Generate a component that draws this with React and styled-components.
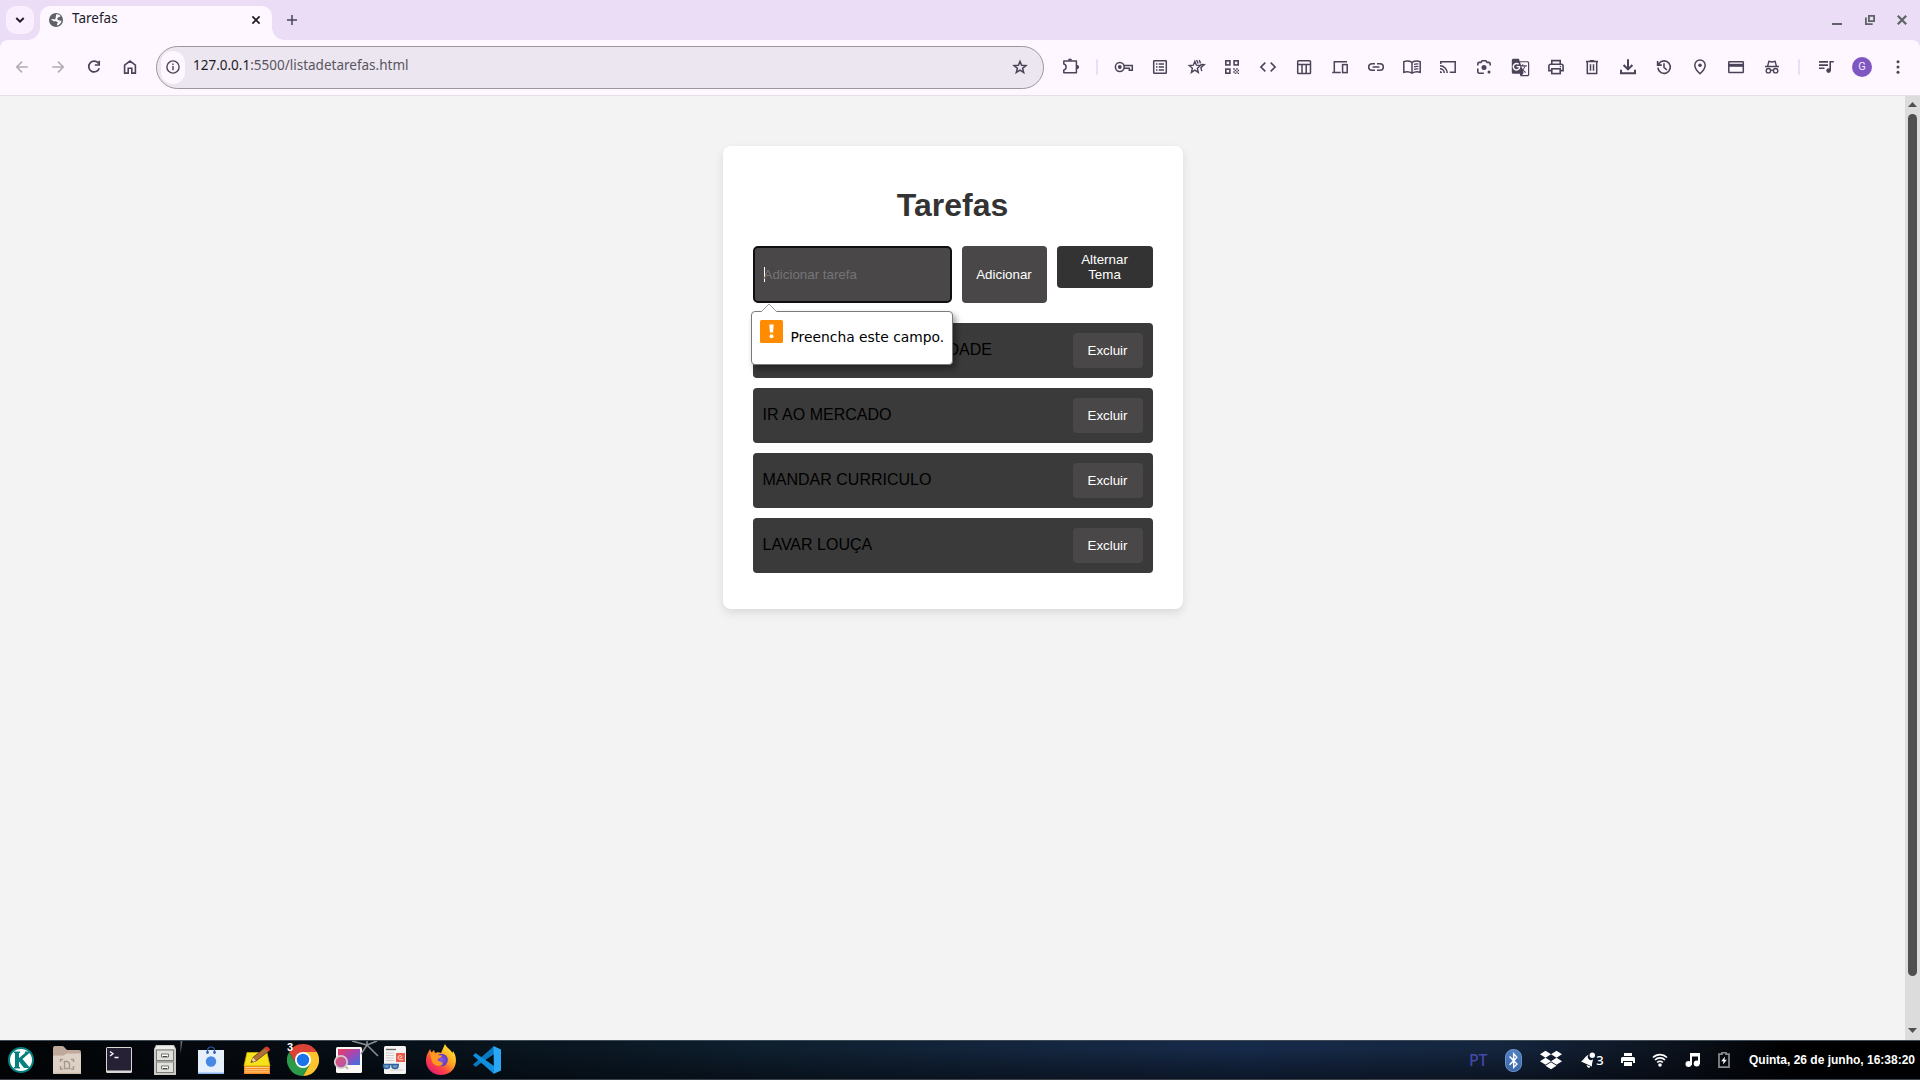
import React from "react";
import styled, { createGlobalStyle } from "styled-components";
import { FaBluetoothB, FaDropbox } from "react-icons/fa";
import { MdGTranslate } from "react-icons/md";

const Global = createGlobalStyle`
  * { box-sizing: border-box; }
  html, body { margin: 0; padding: 0; }
  body { font-family: "Liberation Sans", Arial, sans-serif; overflow: hidden; }
  button, input { font-family: inherit; }
  svg { display: block; flex: none; }
`;

const Screen = styled.div`
  width: 1920px;
  height: 1080px;
  display: flex;
  flex-direction: column;
  background: #eaddf5;
`;

/* ---------- Browser: tab strip ---------- */

const TabStrip = styled.div`
  height: 40px;
  display: flex;
  background: #eaddf5;
  padding: 6px 8px 0 6px;
  font-family: "Noto Sans", sans-serif;
`;

const TabSearch = styled.div`
  width: 28px;
  height: 28px;
  border-radius: 10px;
  background: #f9effe;
  display: flex;
  align-items: center;
  justify-content: center;
`;

const Tab = styled.div`
  position: relative;
  width: 232px;
  height: 34px;
  margin-left: 6px;
  padding: 0 11px 6px 9px;
  border-radius: 10px 10px 0 0;
  background: #fef7ff;
  display: flex;
  align-items: center;
  &::before, &::after {
    content: "";
    position: absolute;
    bottom: 0;
    width: 12px;
    height: 12px;
  }
  &::before {
    left: -12px;
    background: radial-gradient(circle at 0 0, transparent 11.5px, #fef7ff 12px);
  }
  &::after {
    right: -12px;
    background: radial-gradient(circle at 100% 0, transparent 11.5px, #fef7ff 12px);
  }
`;

const TabTitle = styled.span`
  flex: 1;
  margin-left: 9px;
  padding-bottom: 4px;
  font-size: 13.5px;
  line-height: 18px;
  color: #201b27;
`;

const NewTab = styled.div`
  margin-left: 15px;
  width: 10px;
  height: 28px;
  display: flex;
  align-items: center;
`;

const WindowControls = styled.div`
  margin-left: auto;
  display: flex;
  gap: 12.5px;
  height: 28px;
  align-items: center;
`;

/* ---------- Browser: toolbar ---------- */

const Toolbar = styled.div`
  height: 56px;
  display: flex;
  align-items: flex-start;
  background: #fef7ff;
  border-bottom: 1px solid #e6dfea;
  border-radius: 8px 8px 0 0;
  padding: 0 4px;
  color: #4a4458;
`;

const Cell = styled.div`
  flex: none;
  width: 36px;
  height: 54px;
  display: flex;
  align-items: center;
  justify-content: center;
  color: ${(p) => (p.$muted ? "#b2abb6" : "inherit")};
`;

const Omnibox = styled.div`
  flex: none;
  width: 888px;
  height: 43px;
  margin: 6px 8px 0 8px;
  padding: 0 13px 0 4px;
  border: 1px solid #9c96a1;
  border-radius: 22px;
  background: #ece6f0;
  display: flex;
  align-items: center;
  & > svg { margin-bottom: 1px; }
`;

const SiteInfo = styled.div`
  width: 24px;
  height: 33px;
  padding-bottom: 1px;
  border-radius: 12px;
  background: #fef7ff;
  display: flex;
  align-items: center;
  justify-content: center;
`;

const Url = styled.span`
  flex: 1;
  margin-left: 8px;
  padding-bottom: 5px;
  font-family: "Noto Sans", sans-serif;
  font-size: 13.5px;
  line-height: 20px;
  color: #5a5560;
  b { font-weight: 400; color: #1d1b20; }
`;

const Divider = styled.div`
  flex: none;
  width: 2px;
  height: 16px;
  margin: 19px 8px 0;
  border-radius: 1px;
  background: #e8defa;
`;

const Avatar = styled.div`
  width: 20px;
  height: 20px;
  border-radius: 50%;
  background: #7e57c2;
  color: #f3ecfb;
  font: 11px/20px Roboto, sans-serif;
  text-align: center;
`;

/* ---------- Page ---------- */

const Viewport = styled.div`
  flex: 1;
  display: flex;
  background: #f3f3f3;
`;

const Page = styled.main`
  flex: 1;
  display: flex;
  justify-content: center;
  align-items: flex-start;
  padding-top: 50px;
`;

const ScrollBar = styled.div`
  width: 15px;
  background: #dcdcdc;
  display: flex;
  flex-direction: column;
  align-items: center;
  padding: 6px 0 7px;
`;

const Thumb = styled.div`
  width: 9px;
  height: 862px;
  margin: 7px 0 auto;
  border-radius: 5px;
  background: #505050;
`;

const Card = styled.section`
  position: relative;
  width: 460px;
  height: 463px;
  padding: 41px 30px 0;
  border-radius: 8px;
  background: #fff;
  box-shadow: 0 4px 10px rgba(0, 0, 0, 0.1);
`;

const Title = styled.h1`
  margin: 0 0 22px;
  font-size: 32px;
  line-height: 37px;
  text-align: center;
  color: #333;
`;

const Form = styled.div`
  display: flex;
  align-items: flex-start;
  gap: 10px;
  margin-bottom: 20px;
`;

const Field = styled.div`
  width: 199px;
  height: 57px;
  padding: 0 9px;
  border: 2px solid #101010;
  border-radius: 5px;
  background: #4a4748;
  display: flex;
  align-items: center;
  font-size: 13.333px;
  color: #757575;
`;

const Caret = styled.span`
  width: 1px;
  height: 15px;
  margin-right: -1px;
  background: #fff;
`;

const Button = styled.button`
  border: 0;
  padding: 0;
  width: ${(p) => p.$w}px;
  height: ${(p) => p.$h}px;
  border-radius: 4px;
  background: ${(p) => (p.$dark ? "#333" : "#4a4748")};
  color: #fff;
  font-size: 13.333px;
  line-height: 15px;
`;

const List = styled.ul`
  list-style: none;
  margin: 0;
  padding: 0;
  display: flex;
  flex-direction: column;
  gap: 10px;
`;

const Item = styled.li`
  height: 55px;
  padding: 10px;
  border-radius: 4px;
  background: #3a3a3a;
  display: flex;
  justify-content: space-between;
  font-size: 16px;
  color: #000;
`;

const ItemText = styled.span`
  line-height: 18px;
  padding: 8px 0 0 ${(p) => p.$indent || 0}px;
  white-space: nowrap;
`;

const Bubble = styled.div`
  position: absolute;
  left: 28px;
  top: 165px;
  width: 202px;
  height: 54px;
  padding: 8px;
  border: 1px solid #7b7b7b;
  border-radius: 4px;
  background: #fff;
  box-shadow: 3px 4px 6px rgba(0, 0, 0, 0.4);
  display: flex;
  color: #000;
  font: 13.85px/18px "DejaVu Sans", sans-serif;
  white-space: nowrap;
`;

const BubbleArrow = styled.svg`
  position: absolute;
  left: 8px;
  top: -9px;
`;

const BubbleText = styled.span`
  margin: 8px 0 0 8px;
`;

/* ---------- Taskbar ---------- */

const Taskbar = styled.footer`
  height: 40px;
  display: flex;
  align-items: center;
  border-top: 1px solid #3f4c58;
  border-bottom: 1px solid #3b4148;
  background:
    linear-gradient(to bottom, rgba(0, 0, 0, 0) 20%, rgba(2, 3, 8, 0.5) 100%),
    linear-gradient(to right, #020405 0, #05090e 200px, #08131c 480px, #0e1f2e 760px, #14263f 1050px, #162a49 1250px, #14253d 1500px, #0d1420 1660px, #000 1790px);
`;

const Launcher = styled.div`
  position: relative;
  width: 46px;
  height: 38px;
  margin-left: ${(p) => p.$gap || 0}px;
  display: flex;
  align-items: center;
  justify-content: center;
`;

const Streak = styled.svg`
  position: absolute;
  left: ${(p) => p.$x}px;
  top: 0;
`;

const Count = styled.span`
  position: absolute;
  left: 7px;
  top: 0;
  font: bold 11px/13px "Liberation Sans", sans-serif;
  color: #fff;
`;

const Tray = styled.div`
  margin-left: auto;
  height: 38px;
  display: flex;
  align-items: center;
  color: #fff;
`;

const TrayCell = styled.div`
  flex: none;
  width: ${(p) => p.$w}px;
  display: flex;
  align-items: center;
  justify-content: center;
`;

const Lang = styled.span`
  font: 500 16px/20px "Noto Sans", sans-serif;
  color: #4448a8;
  letter-spacing: -0.3px;
`;

const BluetoothPill = styled.span`
  width: 17px;
  height: 23px;
  border-radius: 8px;
  border: 1px solid #6993cb;
  background: linear-gradient(#4f80c0, #3b69ab);
  display: flex;
  align-items: center;
  justify-content: center;
`;

const BellCount = styled.span`
  font: 500 13px/16px "Noto Sans", sans-serif;
  margin-left: 1px;
`;

const Clock = styled.time`
  flex: none;
  width: 178px;
  padding-left: 7px;
  font: bold 12px/16px "Liberation Sans", sans-serif;
  white-space: nowrap;
`;

/* ---------- Toolbar drawings, each on a 20px grid ---------- */

const G = ({ children, w = 1.5, size = 20 }) => (
  <svg width={size} height={size} viewBox="0 0 20 20" fill="none" stroke="currentColor" strokeWidth={w}>
    {children}
  </svg>
);
const fill = { fill: "currentColor", stroke: "none" };

const Back = () => <G w={1.5}><path d="M15.8 10H5M10 4.6 4.7 10 10 15.4" /></G>;
const Forward = () => <G w={1.5}><path d="M4.2 10H15M10 4.6 15.3 10 10 15.4" /></G>;
const Reload = () => <G w={1.7}><path d="M14.6 6.4A5.4 5.4 0 1 0 15.3 11.2" /><path d="M15.2 3.8V8H10.8" /></G>;
const Home = () => <G w={1.6}><path d="M4.6 16.1V8.2L10 4.1l5.4 4.1v7.9h-3.6v-4.9H8.2v4.9z" /></G>;
const Info = () => <G w={1.4}><circle cx="10" cy="10" r="6.1" /><path d="M10 9v4.3M10 6.4v1.5" /></G>;
const Star = () => <G w={1.5}><path d="M10 4.4l1.6 3.9 4.3.3-3.3 2.7 1.1 4.2-3.7-2.3-3.7 2.3 1.1-4.2L4.1 8.6l4.3-.3z" /></G>;
const Puzzle = () => (
  <G>
    <path d="M3.8 4.1H16.4V15.8H3.8V12.9C5.3 12.7 6.1 11.6 6.1 10.1S5.3 7.4 3.8 7.1Z" strokeLinejoin="round" />
    <path d="M7.9 3.5a2.1 2.1 0 0 1 4.2 0zM17 7.9a2.1 2.1 0 0 1 0 4.3z" {...fill} />
  </G>
);
const Key = () => (
  <G>
    <circle cx="5.8" cy="10" r="4.4" /><circle cx="5.8" cy="10" r="1.9" {...fill} />
    <path d="M9.900 8.600h8.400v4.600h-3v-2h-5.300" />
  </G>
);
const ListIcon = () => <G><rect x="3.7" y="3.7" width="12.6" height="12.6" rx=".6" /><path d="M6 7h1.500M6 10h1.500M6 13h1.500M8.700 7H14M8.700 10H14M8.700 13H14" strokeWidth="1.300" /></G>;
const Hotel = () => (
  <G w={1.4}>
    <path d="M8.900 4.400l1.500 3.800 4 .4-3 2.600.9 4.200-3.400-2.200-3.500 2.200 1-4.200-3.100-2.600 4-.4z" />
    <path d="M10.600 3l1.500 3.600M13.300 3l1.100 3.200M14.400 7.500l3.800.2-3.300 3 .9 3.500" />
  </G>
);
const Qr = () => (
  <G w={1.6}>
    <rect x="3.8" y="3.8" width="4.1" height="4.1" /><rect x="12.1" y="3.8" width="4.1" height="4.1" /><rect x="3.8" y="12.1" width="4.1" height="4.1" />
    <path d="M11.2 11.2h1.5v1.5h-1.5zM14.2 11.2h1.5v1.5h-1.5zM12.7 12.7h1.5v1.5h-1.5zM15.7 12.7H17v1.5h-1.3zM11.2 14.2h1.5v1.5h-1.5zM14.2 14.2h1.5v1.5h-1.5zM12.7 15.7h1.5V17h-1.5zM15.7 15.7H17V17h-1.3z" {...fill} />
  </G>
);
const Code = () => <G w={1.6}><path d="M7.3 5.6 2.9 10l4.4 4.4M12.7 5.6l4.4 4.4-4.4 4.4" /></G>;
const Table = () => <G><rect x="3.7" y="3.7" width="12.8" height="12.8" rx=".8" /><path d="M3.7 7.6h12.8M8 7.6v9M12.2 7.6v9" /></G>;
const Devices = () => <G><path d="M4.3 15V4.7H17M2.2 15.4h8.6" /><rect x="12.6" y="7.6" width="4.6" height="8" /></G>;
const Link = () => <G w={1.6}><path d="M9 6.7H6a3.3 3.3 0 0 0 0 6.6h3M11 6.7h3a3.3 3.3 0 0 1 0 6.6h-3M6.6 10h6.8" /></G>;
const Book = () => (
  <G>
    <path d="M10 5.4C7.6 3.9 4.3 3.8 1.8 4.6v10.6c2.5-.8 5.8-.6 8.2.9 2.4-1.5 5.7-1.7 8.2-.9V4.6C15.700 3.800 12.400 3.900 10 5.400v10.500" />
    <path d="M12 7.4c1.500-.500 3-.600 4.500-.400M12 9.900c1.500-.500 3-.600 4.500-.400M12 12.400c1.500-.500 3-.600 4.500-.400" strokeWidth="1.200" />
  </G>
);
const Cast = () => (
  <G>
    <path d="M2.800 7V4.700h14.400v10.600H11.800" />
    <path d="M2 8.800a7.200 7.200 0 0 1 7.200 7.200M2 11.700a4.300 4.300 0 0 1 4.300 4.300" />
    <path d="M2 14a2 2 0 0 1 2 2H2z" {...fill} />
  </G>
);
const Lens = () => (
  <G w={1.600}>
    <path d="M3.800 8.600V6.900a1.500 1.500 0 0 1 1.500-1.500h1.600l1.200-1.600h3.800l1.200 1.600h1.600a1.500 1.500 0 0 1 1.500 1.500v1.700M3.800 11.600v3.100a1.500 1.500 0 0 0 1.500 1.500h4.500" />
    <circle cx="10" cy="10.600" r="2.500" {...fill} /><circle cx="15" cy="14.900" r="1.500" {...fill} />
  </G>
);
const Printer = () => <G w={1.600}><path d="M5.800 7V3.600h8.400V7M5.600 13.600H2.900V9a1.800 1.800 0 0 1 1.800-1.800h10.600A1.800 1.800 0 0 1 17.100 9v4.600h-2.700" /><rect x="5.800" y="11.800" width="8.400" height="4.800" /><circle cx="14.400" cy="9.600" r=".8" {...fill} /></G>;
const Trash = () => <G><path d="M4 4.600h12M7.800 3.800h4.400M5.300 4.600v11.800h9.400V4.600M8.500 7.200v6.600M11.500 7.200v6.600" /></G>;
const Download = () => <G w={2}><path d="M10 2.200v10M5.600 8l4.400 4.400L14.400 8M3 12.800v3.400h14v-3.400" /></G>;
const History = () => <G w={1.600}><path d="M3.900 10.600a6.200 6.200 0 1 0 1.200-4.200L3.600 8.100M3.600 3.900v4.200h4.200M10 6.200v4.200l2.900 2.600" /></G>;
const Pin = () => <G><path d="M10 16.800C6.600 13.600 4.800 11 4.800 8.200a5.200 5.200 0 0 1 10.400 0c0 2.800-1.800 5.400-5.200 8.600z" /><circle cx="10" cy="8.200" r="1.800" {...fill} /></G>;
const CreditCard = () => <G><rect x="2.800" y="4.700" width="14.500" height="10.800" rx=".5" /><path d="M2.500 8.300h15" strokeWidth="3" /></G>;
const Incognito = () => (
  <G w={1.400}>
    <path d="M3 9.500h14M5.600 9.300l1.300-5L10 5l3.100-.7 1.300 5" />
    <circle cx="6.400" cy="13.700" r="2.200" /><circle cx="13.600" cy="13.700" r="2.200" /><path d="M8.600 13.400q1.400-.6 2.800 0" />
  </G>
);
const Queue = () => <G w={1.600}><path d="M3 4.900h9M3 8.100h9M3 11.300h5.500M14.200 13.500V4.700h3.600" /><circle cx="12.600" cy="13.600" r="2.300" {...fill} /></G>;
const More = () => <G><g {...fill}><circle cx="10" cy="4.700" r="1.500" /><circle cx="10" cy="10" r="1.500" /><circle cx="10" cy="15.300" r="1.500" /></g></G>;

const actions = [Key, ListIcon, Hotel, Qr, Code, Table, Devices, Link, Book, Cast, Lens, null, Printer, Trash, Download, History, Pin, CreditCard, Incognito];

/* ---------- Launcher drawings ---------- */

const KLogo = () => (
  <svg width="26" height="26" viewBox="0 0 26 26">
    <circle cx="13" cy="13" r="12" fill="#fff" stroke="#078080" strokeWidth="2" />
    <path d="M6 4.500h6v1.600h-1v5l6-5v-1.600h6L14.500 12l7.500 9h-6l-5-6.500v5.400h1v1.600H6v-1.600h1V6H6z" fill="#078080" />
  </svg>
);
const Folder = () => (
  <svg width="28" height="28" viewBox="0 0 28 28">
    <path d="M0 2q0-2 2-2h7q2 0 3 2l2 2h12q2 0 2 2v20H0z" fill="#bfa99b" />
    <path d="M0 11q0-1.500 1.500-1.500H10q1 0 2-1t2-1h12.500Q28 7.500 28 9v19H0z" fill="#ddd0c4" /><path d="M0 27.300h28" stroke="#c9b8aa" />
    <path d="M11.500 15.500h3l2 2v5h-5zM10 13.500H7.500V16M18 13.500h2.500V16M7.500 20v3H10M20.500 20v3H18" fill="none" stroke="#a8988b" strokeWidth="1.400" />
  </svg>
);
const Terminal = () => (
  <svg width="26" height="26" viewBox="0 0 26 26">
    <rect width="26" height="26" rx="1.500" fill="#d8d8d4" /><rect x="1" y="1" width="24" height="22.500" fill="#262135" />
    <path d="M4 4.500l3 2.300-3 2.300M8.500 10.500h4" fill="none" stroke="#fff" strokeWidth="1.300" />
  </svg>
);
const Cabinet = () => (
  <svg width="22" height="30" viewBox="0 0 22 30">
    <path d="M0 4l2-4h18l2 4v26H0z" fill="#c9c9c5" /><path d="M1 4h20l-2-3H3z" fill="#ededeb" />
    {[5, 17].map((y) => (
      <g key={y}><rect x="2.500" y={y} width="17" height="10.500" fill="#e0e0dd" stroke="#7d7d79" /><path d={`M7.500 ${y + 4}h7v3h-7z`} fill="#fff" stroke="#70706c" /><path d={`M9 ${y + 6.500}h4`} stroke="#444" /></g>
    ))}
  </svg>
);
const Bag = () => (
  <svg width="26" height="28" viewBox="0 0 26 28">
    <path d="M0 4h26v24H0z" fill="#e6effc" /><path d="M0 26.500h26V28H0z" fill="#8ab5f2" />
    <path d="M9.500 7V4.500a3.500 3.500 0 0 1 7 0V7" fill="none" stroke="#2e5aa0" strokeWidth="1.200" />
    <circle cx="9.500" cy="6.500" r="1.400" fill="#2d62b3" /><circle cx="16.500" cy="6.500" r="1.400" fill="#2d62b3" />
    <circle cx="13" cy="15.500" r="5.200" fill="#4688e3" />
  </svg>
);
const Notes = () => (
  <svg width="28" height="28" viewBox="0 0 28 28">
    <path d="M1 19.500h26V28H1z" fill="#f68b1f" /><path d="M2 21.500h24M2 23.700h24M2 25.900h24" stroke="#ffd9a0" strokeWidth=".9" />
    <path d="M4 6.500h20l3 13.500H1z" fill="#f5e21b" stroke="#d0a800" strokeWidth=".8" />
    <path d="M8 16.500l2-5L22 1.500l4 3.500-13 10z" fill="#b0703a" stroke="#5b351a" strokeWidth=".8" />
    <path d="M21.500 2l2-1.500q3 .5 3.500 3.500l-1.500 1.500z" fill="#df3a32" /><path d="M8 16.500l2-5 3 3.500z" fill="#ecd0a0" /><path d="M8 16.500l.8-2 1.200 1z" fill="#222" />
  </svg>
);
const Chrome = () => (
  <svg width="32" height="32" viewBox="0 0 32 32">
    <path d="M2.140 8A16 16 0 0 1 29.860 8L16 8 9.070 20z" fill="#dd4236" />
    <path d="M29.860 8A16 16 0 0 1 16 32L22.930 20 16 8z" fill="#fcc32c" />
    <path d="M16 32A16 16 0 0 1 2.140 8L9.070 20 22.930 20z" fill="#2b9b4b" />
    <circle cx="16" cy="16" r="8" fill="#fff" /><circle cx="16" cy="16" r="6.200" fill="#1b73e8" />
  </svg>
);
const ImageViewer = () => (
  <svg width="30" height="26" viewBox="0 0 30 26">
    <defs>
      <linearGradient id="photo" x1="0" y1="0" x2="1" y2="1"><stop offset="0" stopColor="#ee3c5b" /><stop offset=".5" stopColor="#a447b4" /><stop offset="1" stopColor="#3277e6" /></linearGradient>
      <linearGradient id="lens" x1="0" y1="0" x2="1" y2="1"><stop offset="0" stopColor="#ec4d74" /><stop offset="1" stopColor="#a35cae" /></linearGradient>
    </defs>
    <rect x="2" width="26" height="26" rx="1.500" fill="#fbf8f6" /><path d="M4 2h22v16H4z" fill="url(#photo)" />
    <path d="M10 18l4 4" stroke="#bbb" strokeWidth="2" />
    <circle cx="7" cy="15" r="6.200" fill="url(#lens)" stroke="#d5cccc" strokeWidth="1.700" />
  </svg>
);
const Reader = () => (
  <svg width="28" height="28" viewBox="0 0 28 28">
    <rect x="3" width="22" height="28" rx="1.500" fill="#f4f3f1" /><path d="M5 3.500h10" stroke="#666" strokeWidth="1.300" />
    <path d="M5 7h8M5 9.500h8M5 12h8M5 14.500h8M9 24h13" stroke="#cfcdca" />
    <path d="M15 7h9v9h-9z" fill="#ec5a48" /><path d="M22 13.500q-5 1-5-2 0-2 2.500-2 2 .500 1 2l-2 .500" fill="none" stroke="#ffd9d2" />
    <path d="M2 18.500h16M2.500 18.500v2q0 2 3 2t3-2v-2M11 18.500v2q0 2 3 2t3-2v-2" fill="#6e9fce" stroke="#2e629c" strokeWidth="1.500" />
  </svg>
);
const Firefox = () => (
  <svg width="30" height="32" viewBox="0 0 30 32">
    <defs>
      <linearGradient id="fox" x1=".85" y1=".1" x2=".2" y2=".95"><stop offset="0" stopColor="#ffe534" /><stop offset=".4" stopColor="#ffa221" /><stop offset=".7" stopColor="#fb4540" /><stop offset="1" stopColor="#e61a75" /></linearGradient>
      <radialGradient id="globe"><stop offset="0" stopColor="#8b5bea" /><stop offset="1" stopColor="#5b3cbd" /></radialGradient>
    </defs>
    <path d="M19 0c1 3 4 4.500 6 7l1.500 2 .5-2c3 4 3.500 9 2.500 13C28 27 22 31 15 31 7 31 0 25 0 17 0 11 2 9 4 5l1.500 3.500L8 6l1 3c2-1 4-1 6 0l4-9z" fill="url(#fox)" />
    <circle cx="15.500" cy="16" r="6.300" fill="url(#globe)" />
    <path d="M4 9c3-1 5 0 7 2l5 .5c0 2-3 2.500-4 3.500s0 2 2 2.500c3 1 4 2.500 1 4-4 1.500-8-1-9-4z" fill="#ff9821" />
  </svg>
);
const VsCode = () => (
  <svg width="28" height="28" viewBox="0 0 28 28">
    <path d="M21 0L0 18.500 2.500 21 21 8z" fill="#0a78bf" /><path d="M2.500 7L0 9.500 21 28v-8z" fill="#0f8fdc" />
    <path d="M20.500 0L28 3.500v21L20.500 28l.5-1z" fill="#2aa8f5" />
  </svg>
);

const launchers = [Terminal, Cabinet, Bag, Notes, Chrome, ImageViewer, Reader, Firefox, VsCode];

const tasks = [
  { text: "DADE", indent: 185 },
  { text: "IR AO MERCADO" },
  { text: "MANDAR CURRICULO" },
  { text: "LAVAR LOUÇA" },
];

export default function App() {
  return (
    <Screen>
      <Global />
      <TabStrip>
        <TabSearch>
          <svg width="10" height="10" viewBox="0 0 10 10" fill="none" stroke="#201b27" strokeWidth="2"><path d="M1.300 3L5 6.700 8.700 3" /></svg>
        </TabSearch>
        <Tab>
          <svg width="14" height="14" viewBox="0 0 14 14">
            <circle cx="7" cy="7" r="7" fill="#5f6368" />
            <path d="M7.200 1.200C9 1 11 2 11.700 3.200L9.500 4.200 8 5.800l1.400 1.400 3 .6C12.300 10 10.500 12.300 8 12.500V10.700L9 9.400 7 8.300H4.500L2 6.200 3.800 6l2.400.4.500-2z" fill="#fef7ff" />
          </svg>
          <TabTitle>Tarefas</TabTitle>
          <svg width="10" height="10" viewBox="0 0 10 10" stroke="#201b27" strokeWidth="1.700"><path d="M1.400 1.400l7.200 7.200M8.600 1.400L1.400 8.600" /></svg>
        </Tab>
        <NewTab><svg width="10" height="10" viewBox="0 0 10 10" stroke="#4a4458" strokeWidth="1.500"><path d="M5 0v10M0 5h10" /></svg></NewTab>
        <WindowControls>
          <svg width="20" height="20" viewBox="0 0 20 20" stroke="#5f6368" strokeWidth="2"><path d="M5 14h10" /></svg>
          <svg width="20" height="20" viewBox="0 0 20 20" fill="none" stroke="#5f6368" strokeWidth="1.800"><path d="M8.900 5.900h5.200v5.200H8.900zM5.900 7.500v6.600h6.800" /></svg>
          <svg width="20" height="20" viewBox="0 0 20 20" stroke="#5f6368" strokeWidth="2.200"><path d="M5.800 5.800l8.400 8.400M14.200 5.800l-8.400 8.400" /></svg>
        </WindowControls>
      </TabStrip>

      <Toolbar>
        <Cell $muted><Back /></Cell>
        <Cell $muted><Forward /></Cell>
        <Cell><Reload /></Cell>
        <Cell><Home /></Cell>
        <Omnibox>
          <SiteInfo><Info /></SiteInfo>
          <Url><b>127.0.0.1</b>:5500/listadetarefas.html</Url>
          <Star />
        </Omnibox>
        <Cell><Puzzle /></Cell>
        <Divider />
        {actions.map((Icon, i) => (
          <Cell key={i}>{Icon ? <Icon /> : <MdGTranslate size={19} />}</Cell>
        ))}
        <Divider />
        <Cell><Queue /></Cell>
        <Cell><Avatar>G</Avatar></Cell>
        <Cell><More /></Cell>
      </Toolbar>

      <Viewport>
        <Page>
          <Card>
            <Title>Tarefas</Title>
            <Form>
              <Field><Caret />Adicionar tarefa</Field>
              <Button $w={85} $h={57}>Adicionar</Button>
              <Button $w={96} $h={42} $dark>Alternar<br />Tema</Button>
            </Form>
            <List>
              {tasks.map((t) => (
                <Item key={t.text}>
                  <ItemText $indent={t.indent}>{t.text}</ItemText>
                  <Button $w={70} $h={35}>Excluir</Button>
                </Item>
              ))}
            </List>
            <Bubble>
              <BubbleArrow width="18" height="10" viewBox="0 0 18 10">
                <path d="M1 9.500L9 1.200l8 8.300V10H1z" fill="#fff" />
                <path d="M1 9L9 1l8 8" fill="none" stroke="#a0a0a0" />
              </BubbleArrow>
              <svg width="23" height="23" viewBox="0 0 23 23">
                <rect width="23" height="23" rx="1.500" fill="#ff8c00" />
                <path d="M9.300 4.500h4.400l-.6 8h-3.200z" fill="#fff" /><circle cx="11.500" cy="16.300" r="2" fill="#fff" />
              </svg>
              <BubbleText>Preencha este campo.</BubbleText>
            </Bubble>
          </Card>
        </Page>
        <ScrollBar>
          <svg width="9" height="5" viewBox="0 0 9 5"><path d="M4.500 0L9 5H0z" fill="#505050" /></svg>
          <Thumb />
          <svg width="9" height="5" viewBox="0 0 9 5"><path d="M4.500 5L9 0H0z" fill="#505050" /></svg>
        </ScrollBar>
      </Viewport>

      <Taskbar>
        <Launcher $gap={-2}><KLogo /></Launcher>
        <Launcher><Folder /></Launcher>
        {launchers.map((Icon, i) => (
          <Launcher key={i} $gap={i === 0 ? 6 : 0}>
            {i === 1 && <Streak $x={37} width="4" height="14" viewBox="0 0 4 14"><path d="M1.500 0h2L1.500 13z" fill="#8b9195" opacity=".7" /></Streak>}
            {i === 5 && (
              <Streak $x={26} width="28" height="16" viewBox="0 0 28 16">
                <path d="M15 4L0 0M15 4L25 0M15 4L9 13M15 4L26 15M15 4V0" fill="none" stroke="#8b9195" strokeWidth="1.500" />
              </Streak>
            )}
            <Icon />
            {i === 4 && <Count>3</Count>}
          </Launcher>
        ))}
        <Tray>
          <TrayCell $w={34}><Lang>PT</Lang></TrayCell>
          <TrayCell $w={36}><BluetoothPill><FaBluetoothB size={17} /></BluetoothPill></TrayCell>
          <TrayCell $w={40}><FaDropbox size={22} /></TrayCell>
          <TrayCell $w={43}>
            <svg width="14" height="16" viewBox="0 0 14 16" fill="#fff"><path d="M0 9.500C3 8 4 4 8 2.500a3 3 0 0 0 4 4.800c0 2-1.500 4.500-1 7.200zM5.500 13l4 1.500-1.500 1.500q-2-.5-2.500-3z" /><circle cx="11.300" cy="3.300" r="2.700" /></svg>
            <BellCount>3</BellCount>
          </TrayCell>
          <TrayCell $w={28}>
            <svg width="14" height="14" viewBox="0 0 14 14" fill="#fff"><path d="M3 0h8v3H3zM1.500 4h11Q14 4 14 5.500V10h-2V8H2v2H0V5.500Q0 4 1.500 4zM3 9h8v4H3z" /></svg>
          </TrayCell>
          <TrayCell $w={36}>
            <svg width="16" height="14" viewBox="0 0 16 14" fill="none" stroke="#fff" strokeWidth="1.700"><path d="M1 4.500a10 10 0 0 1 14 0M3 7a7 7 0 0 1 10 0M5.200 9.500a4 4 0 0 1 5.600 0" /><circle cx="8" cy="12" r="1.800" fill="#fff" stroke="none" /></svg>
          </TrayCell>
          <TrayCell $w={28}>
            <svg width="15" height="14" viewBox="0 0 15 14" fill="#fff"><path d="M5 0h10v11h-2V3.500H7V12H5z" /><circle cx="3.500" cy="11" r="3" /><circle cx="11.700" cy="10.500" r="3" /></svg>
          </TrayCell>
          <TrayCell $w={36}>
            <svg width="12" height="16" viewBox="0 0 12 16"><path d="M4 .7h4v1.500h3v13H1v-13h3z" fill="none" stroke="#8a8c8e" strokeWidth="1.700" /><path d="M7 4.500L3.200 9.200h2.300L5 12.500l3.800-4.700H6.500z" fill="#fff" /></svg>
          </TrayCell>
          <Clock>Quinta, 26 de junho, 16:38:20</Clock>
        </Tray>
      </Taskbar>
    </Screen>
  );
}
